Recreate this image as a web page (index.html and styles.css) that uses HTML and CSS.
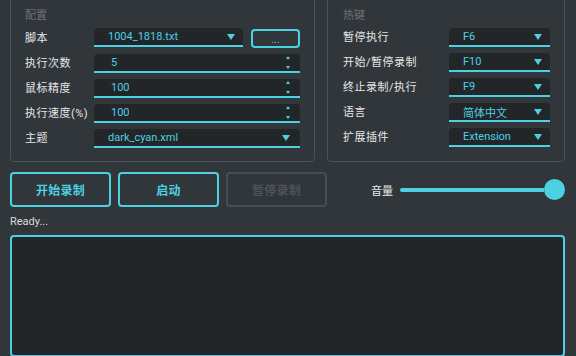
FILE: index.html
```html
<!DOCTYPE html>
<html lang="zh">
  <head>
    <meta charset="UTF-8" />
    <meta name="viewport" content="width=device-width, initial-scale=1.0" />
    <title>KeymouseGo</title>
    <link rel="stylesheet" href="styles.css">
  </head>
  <body>
    <div class="top">
      <section class="group group-config">
        <div class="group-title">配置</div>
        <div class="form form-config">
          <span class="label">脚本</span>
          <div class="field-line">
            <div class="combo">1004_1818.txt<span class="arrow"></span></div>
            <button class="browse">...</button>
          </div>

          <span class="label">执行次数</span>
          <div class="spin">5<span class="spin-arrows"><i class="up"></i><i class="down"></i></span></div>

          <span class="label">鼠标精度</span>
          <div class="spin">100<span class="spin-arrows"><i class="up"></i><i class="down"></i></span></div>

          <span class="label">执行速度(%)</span>
          <div class="spin">100<span class="spin-arrows"><i class="up"></i><i class="down"></i></span></div>

          <span class="label">主题</span>
          <div class="combo combo-wide">dark_cyan.xml<span class="arrow"></span></div>
        </div>
      </section>

      <section class="group group-hotkey">
        <div class="group-title">热键</div>
        <div class="form form-hotkey">
          <span class="label">暂停执行</span>
          <div class="combo">F6<span class="arrow"></span></div>

          <span class="label">开始/暂停录制</span>
          <div class="combo">F10<span class="arrow"></span></div>

          <span class="label">终止录制/执行</span>
          <div class="combo">F9<span class="arrow"></span></div>

          <span class="label">语言</span>
          <div class="combo">简体中文<span class="arrow"></span></div>

          <span class="label">扩展插件</span>
          <div class="combo">Extension<span class="arrow"></span></div>
        </div>
      </section>
    </div>

    <div class="actions">
      <button class="btn">开始录制</button>
      <button class="btn">启动</button>
      <button class="btn" disabled>暂停录制</button>
      <div class="volume">
        <span class="volume-label">音量</span>
        <div class="track"></div>
        <div class="handle"></div>
      </div>
    </div>

    <div class="status">Ready...</div>
    <div class="log"></div>
  </body>
</html>
```

FILE: styles.css
```css
body {
  margin: 0;
  padding: 0 11px 0 10px;
  background-color: #31363b;
  color: #e6e6e6;
  font-family: Roboto, "Noto Sans CJK SC", sans-serif;
  font-size: 11px;
  overflow: hidden;
  height: 356px;
}
.top {
  display: flex;
  gap: 12px;
  margin-top: -9px;
}
.group {
  box-sizing: border-box;
  border: 1px solid #4a5258;
  border-radius: 4px;
  padding: 17px 14px 13px 14px;
}
.group-config {
  width: 305px;
}
.group-hotkey {
  width: 238px;
  padding-left: 15px;
}
.group-title {
  color: #6c7277;
  line-height: 14px;
  margin-bottom: 5px;
}
.form {
  display: grid;
  row-gap: 6px;
  align-items: center;
}
.form-config {
  grid-template-columns: 69px 1fr;
}
.form-hotkey {
  grid-template-columns: 106px 1fr;
}
.label {
  line-height: 19px;
  white-space: nowrap;
  letter-spacing: 0.5px;
}
.field-line {
  display: flex;
  gap: 8px;
}
.combo,
.spin {
  box-sizing: border-box;
  height: 19px;
  display: flex;
  align-items: center;
  background-color: #232629;
  border-radius: 4px 4px 0 0;
  border-bottom: 2px solid #4dd0e1;
  color: #4dd0e1;
  padding: 0 8px 0 14px;
}
.field-line .combo {
  flex: 1;
}
.spin {
  padding: 0 10px 0 17px;
}
.arrow {
  margin-left: auto;
  width: 0;
  height: 0;
  border-left: 4px solid transparent;
  border-right: 4px solid transparent;
  border-top: 6px solid #4dd0e1;
}
.combo-wide .arrow {
  margin-right: 2px;
}
.spin-arrows {
  margin-left: auto;
  display: flex;
  flex-direction: column;
  justify-content: space-between;
  height: 13px;
}
.spin-arrows i {
  width: 0;
  height: 0;
  border-left: 2.5px solid transparent;
  border-right: 2.5px solid transparent;
}
.spin-arrows .up {
  border-bottom: 3px solid #4dd0e1;
}
.spin-arrows .down {
  border-top: 3px solid #4dd0e1;
}
.browse {
  box-sizing: border-box;
  width: 49px;
  height: 19px;
  margin-top: 1px;
  background: transparent;
  border: 2px solid #4dd0e1;
  border-radius: 4px;
  color: #4dd0e1;
  font-family: inherit;
  font-size: 11px;
  line-height: 12px;
  padding: 2px 0 0 0;
}
.actions {
  display: flex;
  align-items: center;
  gap: 7px;
  margin-top: 10px;
}
.btn {
  box-sizing: border-box;
  width: 101px;
  height: 35px;
  background: transparent;
  border: 2px solid #4dd0e1;
  border-radius: 4px;
  color: #4dd0e1;
  font-family: inherit;
  font-size: 12px;
  font-weight: bold;
  letter-spacing: 0.3px;
}
.btn:disabled {
  border-color: #464d53;
  color: #4d5358;
}
.volume {
  flex: 1;
  display: flex;
  align-items: center;
  margin-left: 37px;
}
.volume-label {
  margin-right: 7px;
}
.track {
  flex: 1;
  height: 4px;
  background-color: #4dd0e1;
  border-radius: 2px 0 0 2px;
}
.handle {
  width: 21px;
  height: 21px;
  border-radius: 50%;
  background-color: #4dd0e1;
}
.status {
  line-height: 14px;
  margin-top: 8px;
  color: #dcdcdc;
}
.log {
  box-sizing: border-box;
  height: 122px;
  margin-top: 6px;
  background-color: #232629;
  border: 2px solid #4dd0e1;
  border-radius: 4px;
}
```
